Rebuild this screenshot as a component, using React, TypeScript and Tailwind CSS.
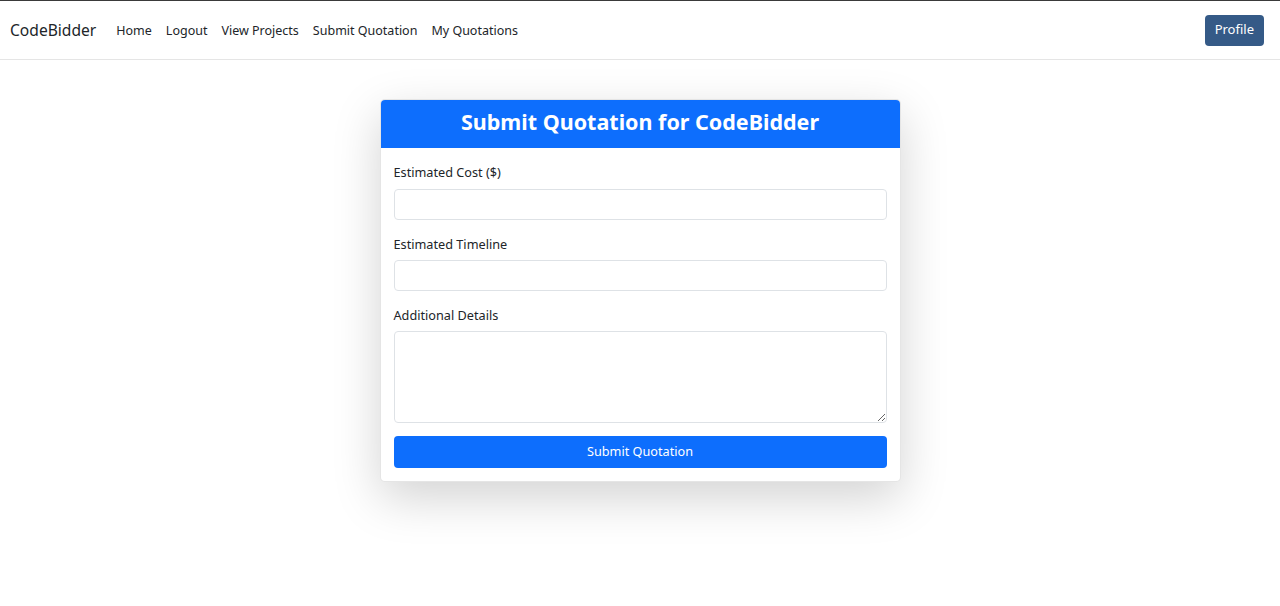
export default function App() {
  const navLinks = ['Home', 'Logout', 'View Projects', 'Submit Quotation', 'My Quotations'];

  return (
    <div className="min-h-[606px] bg-white text-[#212529] font-['Noto_Sans',sans-serif]">
      <nav className="border-t border-t-[#3a3a3a] border-b border-b-[#e5e5e5] bg-white">
        <div className="flex items-center justify-between h-[58px] pl-[10px] pr-4">
          <div className="flex items-center pt-[2px]">
            <span className="text-[15.6px] text-[#212529] mr-[13px]">CodeBidder</span>
            {navLinks.map((label) => (
              <a key={label} href="#" className="px-[7px] text-[12.5px] text-[#212529]">
                {label}
              </a>
            ))}
          </div>
          <button className="h-[31px] px-[10px] rounded-[4px] bg-[#355a87] text-white text-[13px]">
            Profile
          </button>
        </div>
      </nav>

      <div className="pt-[39px]">
        <div className="w-[521px] mx-auto bg-white rounded-[5px] border border-black/10 shadow-[0_16px_48px_rgba(0,0,0,0.175)] overflow-hidden">
          <div className="h-[48px] bg-[#0d6efd] flex items-center justify-center pb-[4px]">
            <h1 className="text-[21.5px] font-bold text-white">Submit Quotation for CodeBidder</h1>
          </div>
          <form className="px-[13px] pt-[14px] pb-[13px]" onSubmit={(e) => e.preventDefault()}>
            <label className="block text-[12.7px] leading-5 mb-[7px]">Estimated Cost ($)</label>
            <input className="block w-full h-[31px] rounded-[4px] border border-[#dee2e6] px-2 text-[13px] outline-none" />

            <label className="block text-[12.7px] leading-5 mt-[14px] mb-[6px]">Estimated Timeline</label>
            <input className="block w-full h-[31px] rounded-[4px] border border-[#dee2e6] px-2 text-[13px] outline-none" />

            <label className="block text-[12.7px] leading-5 mt-[14px] mb-[6px]">Additional Details</label>
            <textarea className="block w-full h-[92px] rounded-[4px] border border-[#dee2e6] px-2 py-1 text-[13px] outline-none" />

            <button type="submit" className="mt-[13px] w-full h-[32px] rounded-[4px] bg-[#0d6efd] text-white text-[12.7px]">
              Submit Quotation
            </button>
          </form>
        </div>
      </div>
    </div>
  );
}
